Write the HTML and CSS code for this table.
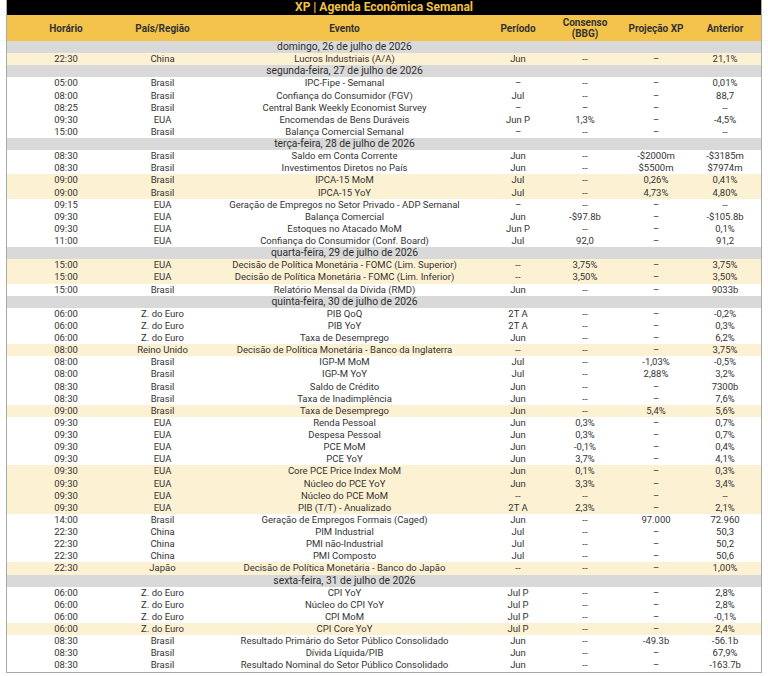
FILE: index.html
```html
<!DOCTYPE html>
<html lang="pt-BR">
<head>
<meta charset="utf-8">
<title>XP | Agenda Econômica Semanal</title>
<link rel="stylesheet" href="styles.css">
</head>
<body>
<div class="sheet">
<table class="agenda">
<colgroup>
<col class="c-time"><col class="c-country"><col class="c-event"><col class="c-period"><col class="c-cons"><col class="c-proj"><col class="c-prev">
</colgroup>
<thead>
<tr class="title"><th colspan="7">XP | Agenda Econômica Semanal</th></tr>
<tr class="head"><th>Horário</th><th>País/Região</th><th>Evento</th><th>Período</th><th>Consenso<br>(BBG)</th><th>Projeção XP</th><th>Anterior</th></tr>
</thead>
<tbody>
<tr class="day"><td></td><td></td><td>domingo, 26 de julho de 2026</td><td></td><td></td><td></td><td></td></tr>
<tr class="hl"><td>22:30</td><td>China</td><td>Lucros Industriais (A/A)</td><td>Jun</td><td>--</td><td>–</td><td>21,1%</td></tr>
<tr class="day"><td></td><td></td><td>segunda-feira, 27 de julho de 2026</td><td></td><td></td><td></td><td></td></tr>
<tr><td>05:00</td><td>Brasil</td><td>IPC-Fipe - Semanal</td><td>–</td><td>--</td><td>–</td><td>0,01%</td></tr>
<tr><td>08:00</td><td>Brasil</td><td>Confiança do Consumidor (FGV)</td><td>Jul</td><td>--</td><td>–</td><td>88,7</td></tr>
<tr><td>08:25</td><td>Brasil</td><td>Central Bank Weekly Economist Survey</td><td>–</td><td>–</td><td>–</td><td>--</td></tr>
<tr><td>09:30</td><td>EUA</td><td>Encomendas de Bens Duráveis</td><td>Jun P</td><td>1,3%</td><td>–</td><td>-4,5%</td></tr>
<tr><td>15:00</td><td>Brasil</td><td>Balança Comercial Semanal</td><td>–</td><td>--</td><td>–</td><td>--</td></tr>
<tr class="day"><td></td><td></td><td>terça-feira, 28 de julho de 2026</td><td></td><td></td><td></td><td></td></tr>
<tr><td>08:30</td><td>Brasil</td><td>Saldo em Conta Corrente</td><td>Jun</td><td>--</td><td>-$2000m</td><td>-$3185m</td></tr>
<tr><td>08:30</td><td>Brasil</td><td>Investimentos Diretos no País</td><td>Jun</td><td>--</td><td>$5500m</td><td>$7974m</td></tr>
<tr class="hl"><td>09:00</td><td>Brasil</td><td>IPCA-15 MoM</td><td>Jul</td><td>--</td><td>0,26%</td><td>0,41%</td></tr>
<tr class="hl"><td>09:00</td><td>Brasil</td><td>IPCA-15 YoY</td><td>Jul</td><td>--</td><td>4,73%</td><td>4,80%</td></tr>
<tr><td>09:15</td><td>EUA</td><td>Geração de Empregos no Setor Privado - ADP Semanal</td><td>–</td><td>--</td><td>–</td><td>--</td></tr>
<tr><td>09:30</td><td>EUA</td><td>Balança Comercial</td><td>Jun</td><td>-$97.8b</td><td>–</td><td>-$105.8b</td></tr>
<tr><td>09:30</td><td>EUA</td><td>Estoques no Atacado MoM</td><td>Jun P</td><td>--</td><td>–</td><td>0,1%</td></tr>
<tr><td>11:00</td><td>EUA</td><td>Confiança do Consumidor (Conf. Board)</td><td>Jul</td><td>92,0</td><td>–</td><td>91,2</td></tr>
<tr class="day"><td></td><td></td><td>quarta-feira, 29 de julho de 2026</td><td></td><td></td><td></td><td></td></tr>
<tr class="hl"><td>15:00</td><td>EUA</td><td>Decisão de Política Monetária - FOMC (Lim. Superior)</td><td>--</td><td>3,75%</td><td>–</td><td>3,75%</td></tr>
<tr class="hl"><td>15:00</td><td>EUA</td><td>Decisão de Política Monetária - FOMC (Lim. Inferior)</td><td>--</td><td>3,50%</td><td>–</td><td>3,50%</td></tr>
<tr><td>15:00</td><td>Brasil</td><td>Relatório Mensal da Dívida (RMD)</td><td>Jun</td><td>--</td><td>–</td><td>9033b</td></tr>
<tr class="day"><td></td><td></td><td>quinta-feira, 30 de julho de 2026</td><td></td><td></td><td></td><td></td></tr>
<tr><td>06:00</td><td>Z. do Euro</td><td>PIB QoQ</td><td>2T A</td><td>--</td><td>–</td><td>-0,2%</td></tr>
<tr><td>06:00</td><td>Z. do Euro</td><td>PIB YoY</td><td>2T A</td><td>--</td><td>–</td><td>0,3%</td></tr>
<tr><td>06:00</td><td>Z. do Euro</td><td>Taxa de Desemprego</td><td>Jun</td><td>--</td><td>–</td><td>6,2%</td></tr>
<tr class="hl"><td>08:00</td><td>Reino Unido</td><td>Decisão de Política Monetária - Banco da Inglaterra</td><td>--</td><td>--</td><td>–</td><td>3,75%</td></tr>
<tr><td>08:00</td><td>Brasil</td><td>IGP-M MoM</td><td>Jul</td><td>--</td><td>-1,03%</td><td>-0,5%</td></tr>
<tr><td>08:00</td><td>Brasil</td><td>IGP-M YoY</td><td>Jul</td><td>--</td><td>2,88%</td><td>3,2%</td></tr>
<tr><td>08:30</td><td>Brasil</td><td>Saldo de Crédito</td><td>Jun</td><td>--</td><td>–</td><td>7300b</td></tr>
<tr><td>08:30</td><td>Brasil</td><td>Taxa de Inadimplência</td><td>Jun</td><td>--</td><td>–</td><td>7,6%</td></tr>
<tr class="hl"><td>09:00</td><td>Brasil</td><td>Taxa de Desemprego</td><td>Jun</td><td>--</td><td>5,4%</td><td>5,6%</td></tr>
<tr><td>09:30</td><td>EUA</td><td>Renda Pessoal</td><td>Jun</td><td>0,3%</td><td>–</td><td>0,7%</td></tr>
<tr><td>09:30</td><td>EUA</td><td>Despesa Pessoal</td><td>Jun</td><td>0,3%</td><td>–</td><td>0,7%</td></tr>
<tr><td>09:30</td><td>EUA</td><td>PCE MoM</td><td>Jun</td><td>-0,1%</td><td>–</td><td>0,4%</td></tr>
<tr><td>09:30</td><td>EUA</td><td>PCE YoY</td><td>Jun</td><td>3,7%</td><td>–</td><td>4,1%</td></tr>
<tr class="hl"><td>09:30</td><td>EUA</td><td>Core PCE Price Index MoM</td><td>Jun</td><td>0,1%</td><td>–</td><td>0,3%</td></tr>
<tr class="hl"><td>09:30</td><td>EUA</td><td>Núcleo do PCE YoY</td><td>Jun</td><td>3,3%</td><td>–</td><td>3,4%</td></tr>
<tr class="hl"><td>09:30</td><td>EUA</td><td>Núcleo do PCE MoM</td><td>--</td><td>--</td><td>–</td><td>--</td></tr>
<tr class="hl"><td>09:30</td><td>EUA</td><td>PIB (T/T) - Anualizado</td><td>2T A</td><td>2,3%</td><td>–</td><td>2,1%</td></tr>
<tr><td>14:00</td><td>Brasil</td><td>Geração de Empregos Formais (Caged)</td><td>Jun</td><td>--</td><td>97.000</td><td>72.960</td></tr>
<tr><td>22:30</td><td>China</td><td>PIM Industrial</td><td>Jul</td><td>--</td><td>–</td><td>50,3</td></tr>
<tr><td>22:30</td><td>China</td><td>PMI não-Industrial</td><td>Jul</td><td>--</td><td>–</td><td>50,2</td></tr>
<tr><td>22:30</td><td>China</td><td>PMI Composto</td><td>Jul</td><td>--</td><td>–</td><td>50,6</td></tr>
<tr class="hl"><td>22:30</td><td>Japão</td><td>Decisão de Política Monetária - Banco do Japão</td><td>--</td><td>--</td><td>–</td><td>1,00%</td></tr>
<tr class="day"><td></td><td></td><td>sexta-feira, 31 de julho de 2026</td><td></td><td></td><td></td><td></td></tr>
<tr><td>06:00</td><td>Z. do Euro</td><td>CPI YoY</td><td>Jul P</td><td>--</td><td>–</td><td>2,8%</td></tr>
<tr><td>06:00</td><td>Z. do Euro</td><td>Núcleo do CPI YoY</td><td>Jul P</td><td>--</td><td>–</td><td>2,8%</td></tr>
<tr><td>06:00</td><td>Z. do Euro</td><td>CPI MoM</td><td>Jul P</td><td>--</td><td>–</td><td>-0,1%</td></tr>
<tr class="hl"><td>06:00</td><td>Z. do Euro</td><td>CPI Core YoY</td><td>Jul P</td><td>--</td><td>–</td><td>2,4%</td></tr>
<tr><td>08:30</td><td>Brasil</td><td>Resultado Primário do Setor Público Consolidado</td><td>Jun</td><td>--</td><td>-49.3b</td><td>-56.1b</td></tr>
<tr><td>08:30</td><td>Brasil</td><td>Dívida Líquida/PIB</td><td>Jun</td><td>--</td><td>–</td><td>67,9%</td></tr>
<tr><td>08:30</td><td>Brasil</td><td>Resultado Nominal do Setor Público Consolidado</td><td>Jun</td><td>--</td><td>–</td><td>-163.7b</td></tr>
</tbody>
</table>
</div>
</body>
</html>
```

FILE: styles.css
```css
html, body {
  margin: 0;
  padding: 0;
  background: #ffffff;
}

body {
  font-family: Roboto, "Liberation Sans", Arial, sans-serif;
  color: #333333;
}

.sheet {
  margin-left: 6px;
  width: 754px;
  border: 1px solid #a9a9a9;
  border-top: 0;
}

.agenda {
  width: 100%;
  border-collapse: collapse;
  border-spacing: 0;
  table-layout: fixed;
}

.c-time { width: 118px; }
.c-country { width: 75px; }
.c-event { width: 289px; }
.c-period { width: 58px; }
.c-cons { width: 76px; }
.c-proj { width: 66px; }
.c-prev { width: 72px; }

.agenda th,
.agenda td {
  padding: 0;
  text-align: center;
  white-space: nowrap;
  overflow: visible;
}

.title th {
  background: #000000;
  color: #f3c146;
  font-size: 12px;
  font-weight: 700;
  height: 15px;
  line-height: 15px;
}

.head th {
  background: #f4c34b;
  color: #333333;
  font-size: 10px;
  font-weight: 700;
  height: 26px;
  line-height: 11px;
}

.agenda tbody td {
  height: 12.13px;
  line-height: 12px;
  font-size: 9.5px;
  color: #333333;
}

.agenda tbody tr.day td {
  background: #d9d9d9;
  font-size: 10.3px;
  color: #2e2e2e;
}

.agenda tbody tr.hl td {
  background: #fdf1d3;
}
```
